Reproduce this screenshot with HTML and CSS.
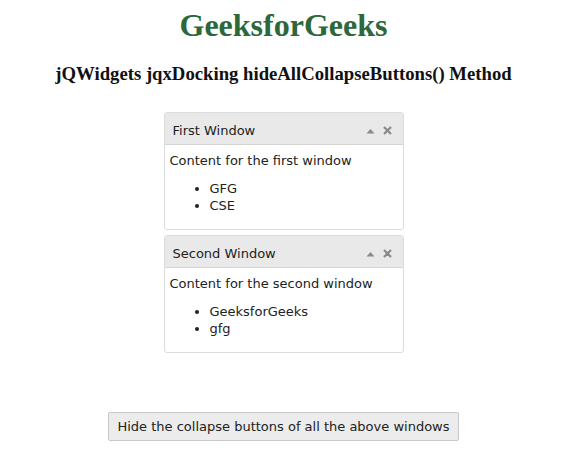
FILE: index.html
```html
<!DOCTYPE html>
<html>
<head>
<meta charset="utf-8">
<link rel="stylesheet" href="styles.css">
</head>
<body>
<div class="page">
  <h1 class="title">GeeksforGeeks</h1>
  <h3 class="subtitle">jQWidgets jqxDocking hideAllCollapseButtons() Method</h3>
  <div class="docking">
    <div class="window">
      <div class="win-header">
        <span class="win-title">First Window</span>
        <span class="win-tools">
          <svg class="icon" width="9" height="6" viewBox="0 0 9 6"><path d="M0.5 5.5 L4.5 1 L8.5 5.5 Z" fill="#8a8a8a"/></svg>
          <svg class="icon" width="9" height="9" viewBox="0 0 9 9"><path d="M1 1 L8 8 M8 1 L1 8" stroke="#8a8a8a" stroke-width="2.2"/></svg>
        </span>
      </div>
      <div class="win-content">
        Content for the first window
        <ul class="list">
          <li>GFG</li>
          <li>CSE</li>
        </ul>
      </div>
    </div>
    <div class="window">
      <div class="win-header">
        <span class="win-title">Second Window</span>
        <span class="win-tools">
          <svg class="icon" width="9" height="6" viewBox="0 0 9 6"><path d="M0.5 5.5 L4.5 1 L8.5 5.5 Z" fill="#8a8a8a"/></svg>
          <svg class="icon" width="9" height="9" viewBox="0 0 9 9"><path d="M1 1 L8 8 M8 1 L1 8" stroke="#8a8a8a" stroke-width="2.2"/></svg>
        </span>
      </div>
      <div class="win-content">
        Content for the second window
        <ul class="list">
          <li>GeeksforGeeks</li>
          <li>gfg</li>
        </ul>
      </div>
    </div>
  </div>
  <div class="actions">
    <button class="btn">Hide the collapse buttons of all the above windows</button>
  </div>
</div>
</body>
</html>
```

FILE: styles.css
```css
html, body {
  margin: 0;
  padding: 0;
  background: #fff;
}
.page {
  width: 567px;
  text-align: center;
  font-family: "Liberation Serif", "Times New Roman", serif;
}
.title {
  margin: 7px 0 0;
  font-size: 32px;
  font-weight: bold;
  color: #2d683a;
}
.subtitle {
  margin: 19px 0 0;
  font-size: 18.72px;
  font-weight: bold;
  color: #111;
}
.docking {
  width: 240px;
  margin: 27px auto 0;
  display: flex;
  flex-direction: column;
  gap: 5px;
  text-align: left;
  font-family: "DejaVu Sans", Verdana, sans-serif;
  font-size: 13px;
  color: #222;
}
.window {
  border: 1px solid #dcdcdc;
  border-radius: 3px;
  overflow: hidden;
  background: #fff;
}
.win-header {
  height: 32px;
  box-sizing: border-box;
  background: #e9e9e9;
  border-bottom: 1px solid #d5d5d5;
  display: flex;
  align-items: center;
  justify-content: space-between;
  padding: 4px 11px 0 8px;
}
.win-title {
  font-size: 13px;
  color: #222;
}
.win-tools {
  display: flex;
  align-items: center;
  gap: 8px;
}
.icon {
  display: block;
}
.win-content {
  padding: 7px 5px 0 5px;
  height: 77px;
  line-height: 17px;
}
.list {
  margin: 11px 0 0;
  padding-left: 40px;
}
.actions {
  margin-top: 59px;
  text-align: center;
}
.btn {
  font-family: "DejaVu Sans", Verdana, sans-serif;
  font-size: 13px;
  color: #222;
  background: #ececec;
  border: 1px solid #c8c8c8;
  border-radius: 2px;
  height: 29px;
  padding: 0 8px;
}
```
